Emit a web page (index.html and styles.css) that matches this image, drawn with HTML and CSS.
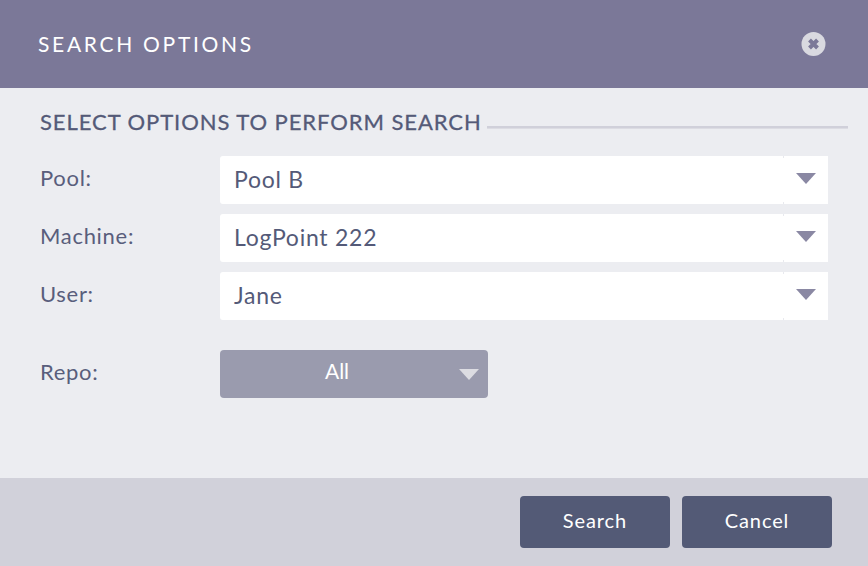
FILE: index.html
```html
<!DOCTYPE html>
<html lang="en">
<head>
<meta charset="utf-8">
<title>Search Options</title>
<link rel="stylesheet" href="styles.css">
</head>
<body>
<div class="dialog">
  <header class="header">
    <h1 class="title">SEARCH OPTIONS</h1>
    <svg class="close" width="26" height="26" viewBox="0 0 26 26" aria-label="Close">
      <circle cx="12.5" cy="13" r="12" fill="#d9d9e0"/>
      <path d="M8.5 9l8 8M16.5 9l-8 8" stroke="#7b7898" stroke-width="4"/>
    </svg>
  </header>
  <main class="body">
    <div class="section">
      <h2 class="section-title">SELECT OPTIONS TO PERFORM SEARCH</h2>
      <div class="rule"></div>
    </div>
    <div class="rows">
      <div class="row">
        <span class="label">Pool:</span>
        <div class="select"><span class="value">Pool B</span><svg class="arrow" width="20" height="11" viewBox="0 0 20 11"><path d="M0 0h20l-10 11z" fill="#8a88a3"/></svg></div>
      </div>
      <div class="row">
        <span class="label">Machine:</span>
        <div class="select"><span class="value">LogPoint 222</span><svg class="arrow" width="20" height="11" viewBox="0 0 20 11"><path d="M0 0h20l-10 11z" fill="#8a88a3"/></svg></div>
      </div>
      <div class="row">
        <span class="label">User:</span>
        <div class="select"><span class="value">Jane</span><svg class="arrow" width="20" height="11" viewBox="0 0 20 11"><path d="M0 0h20l-10 11z" fill="#8a88a3"/></svg></div>
      </div>
      <div class="row row-repo">
        <span class="label">Repo:</span>
        <div class="repo"><span class="repo-value">All</span><svg class="repo-arrow" width="20" height="11" viewBox="0 0 20 11"><path d="M0 0h20l-10 11z" fill="#dcdce2"/></svg></div>
      </div>
    </div>
  </main>
  <footer class="footer">
    <button class="btn" type="button">Search</button>
    <button class="btn" type="button">Cancel</button>
  </footer>
</div>
</body>
</html>
```

FILE: styles.css
```css
* { box-sizing: border-box; }
html, body { margin: 0; padding: 0; }
body {
  width: 868px;
  height: 566px;
  overflow: hidden;
  font-family: Lato, "Open Sans", sans-serif;
  background: #ecedf1;
}
.dialog { display: flex; flex-direction: column; height: 566px; }
.header {
  height: 88px;
  background: #7b7898;
  display: flex;
  align-items: center;
  justify-content: space-between;
  padding: 0 41px 0 38px;
}
.title {
  margin: 0 0 2px;
  font-size: 21px;
  font-weight: 400;
  letter-spacing: 2.7px;
  color: #fff;
}
.close { display: block; margin-top: -1px; }
.body { flex: 1; padding: 20px 20px 0 40px; }
.section { display: flex; align-items: flex-start; height: 48px; }
.section-title {
  margin: 0;
  font-size: 22px;
  line-height: 28px;
  font-weight: 400;
  letter-spacing: 0.93px;
  color: #545a78;
  -webkit-text-stroke: 0.3px #545a78;
  white-space: nowrap;
}
.rule {
  flex: 1;
  height: 3px;
  background: #d0d0da;
  border-bottom: 1px solid #dcdce3;
  margin: 18px 0 0 5px;
}
.rows { display: flex; flex-direction: column; gap: 10px; width: 788px; }
.row { display: flex; align-items: center; height: 48px; }
.row-repo { margin-top: 20px; }
.label {
  width: 180px;
  font-size: 22px;
  color: #595e7c;
  letter-spacing: 0.7px;
  position: relative;
  top: -3px;
}
.select {
  position: relative;
  width: 608px;
  height: 48px;
  background: #fff;
  border-radius: 3px 0 0 3px;
  display: flex;
  align-items: center;
  justify-content: space-between;
  padding: 0 12px 0 14px;
}
.select::before,
.select::after {
  content: "";
  position: absolute;
  left: 563px;
  width: 1px;
  height: 2px;
  background: #e8e9ee;
}
.select::before { top: 0; }
.select::after { bottom: 0; }
.value {
  font-size: 23px;
  color: #545a78;
  letter-spacing: 0.75px;
  position: relative;
  top: -1px;
}
.arrow { display: block; margin-top: -4px; }
.repo {
  width: 268px;
  height: 48px;
  background: #9a9bae;
  border-radius: 4px;
  display: flex;
  align-items: center;
  padding: 0 9px 0 0;
}
.repo-value {
  flex: 1;
  text-align: center;
  font-size: 21px;
  color: #fff;
  padding-right: 5px;
  position: relative;
  top: -4px;
}
.repo-arrow { display: block; }
.footer {
  height: 88px;
  background: #d1d1da;
  display: flex;
  justify-content: flex-end;
  gap: 12px;
  padding: 18px 36px 0 0;
}
.btn {
  width: 150px;
  height: 52px;
  border: 0;
  border-radius: 4px;
  background: #535a76;
  color: #fff;
  font-family: inherit;
  font-size: 20px;
  letter-spacing: 0.9px;
  padding: 0 0 4px;
}
```
